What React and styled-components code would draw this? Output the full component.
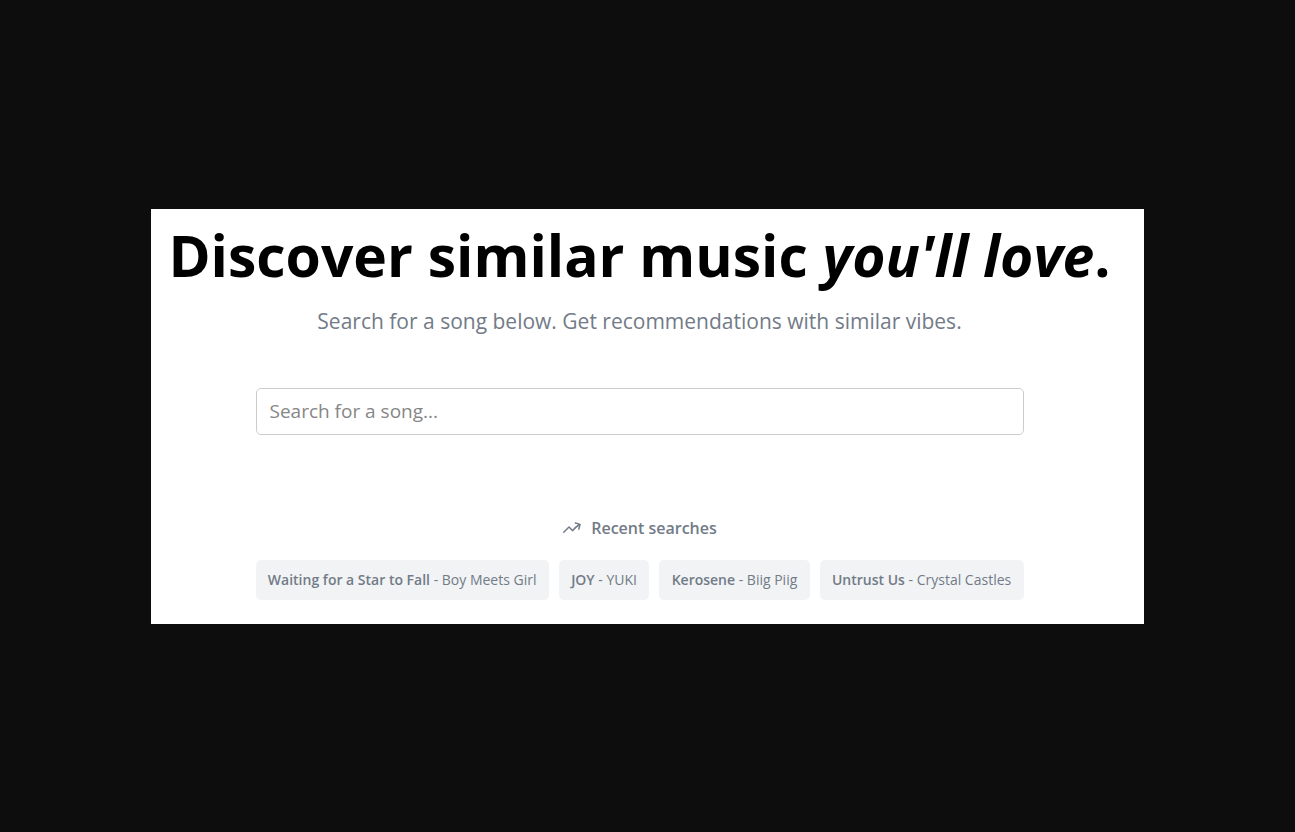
import { HiMiniArrowTrendingUp } from 'react-icons/hi2';
import styled, { createGlobalStyle } from 'styled-components';

const recentSearches = [
    { id: 1, title: 'Waiting for a Star to Fall', artist: 'Boy Meets Girl' },
    { id: 2, title: 'JOY', artist: 'YUKI' },
    { id: 3, title: 'Kerosene', artist: 'Biig Piig' },
    { id: 4, title: 'Untrust Us', artist: 'Crystal Castles' },
];

export default function App() {
    return (
        <Page>
            <GlobalStyle />
            <Hero>
                <Title>Discover similar music <em>you'll love</em>.</Title>
                <Subtitle>Search for a song below. Get recommendations with similar vibes.</Subtitle>
                <Content>
                    <SearchInput type="text" aria-label="Search for a song" placeholder="Search for a song..." />
                    <RecentHeading>
                        <TrendIcon aria-hidden="true" />
                        Recent searches
                    </RecentHeading>
                    <RecentList>
                        {recentSearches.map(s =>
                            <RecentButton key={s.id} type="button">
                                <strong>{s.title}</strong> - {s.artist}
                            </RecentButton>
                        )}
                    </RecentList>
                </Content>
            </Hero>
        </Page>
    );
}

const GlobalStyle = createGlobalStyle`
    body {
        margin: 0;
        background: #0d0d0d;
        font-family: "Segoe UI", "Open Sans", "Noto Sans", sans-serif;
    }
`;

const Page = styled.main`
    display: flex;
    align-items: center;
    justify-content: center;
    min-height: 100vh;
`;

const Hero = styled.section`
    display: flex;
    flex-direction: column;
    align-items: center;
    box-sizing: border-box;
    width: 100%;
    max-width: 993px;
    padding: 8px 32px 24px 16px;
    background: #fff;
`;

const Title = styled.h1`
    margin: 0;
    font-size: 57px;
    line-height: 76px;
    font-weight: 700;
    text-align: center;
    color: #000;
`;

const Subtitle = styled.p`
    margin: 12px 0 0;
    font-size: 21px;
    line-height: 32px;
    text-align: center;
    color: #727b87;
`;

const Content = styled.div`
    width: 100%;
    max-width: 768px;
    margin-top: 51px;
`;

const SearchInput = styled.input`
    box-sizing: border-box;
    display: block;
    width: 100%;
    height: 47px;
    padding: 0 13px;
    border: 1px solid #ccc;
    border-radius: 5px;
    font: inherit;
    font-size: 19px;

    &::placeholder {
        color: #868686;
        opacity: 1;
    }
`;

const RecentHeading = styled.h2`
    display: flex;
    align-items: center;
    justify-content: center;
    gap: 9px;
    margin: 81px 0 20px;
    font-size: 16px;
    line-height: 24px;
    font-weight: 600;
    color: #727b87;
`;

const TrendIcon = styled(HiMiniArrowTrendingUp)`
    width: 20px;
    height: 20px;
`;

const RecentList = styled.div`
    display: flex;
    flex-wrap: wrap;
    gap: 10px;
`;

const RecentButton = styled.button`
    flex: 1 1 auto;
    height: 40px;
    padding: 0 10px;
    border: 0;
    border-radius: 5px;
    background: #f1f3f5;
    color: #727b87;
    font: inherit;
    font-size: 14px;
    white-space: nowrap;

    strong {
        font-weight: 600;
    }
`;
